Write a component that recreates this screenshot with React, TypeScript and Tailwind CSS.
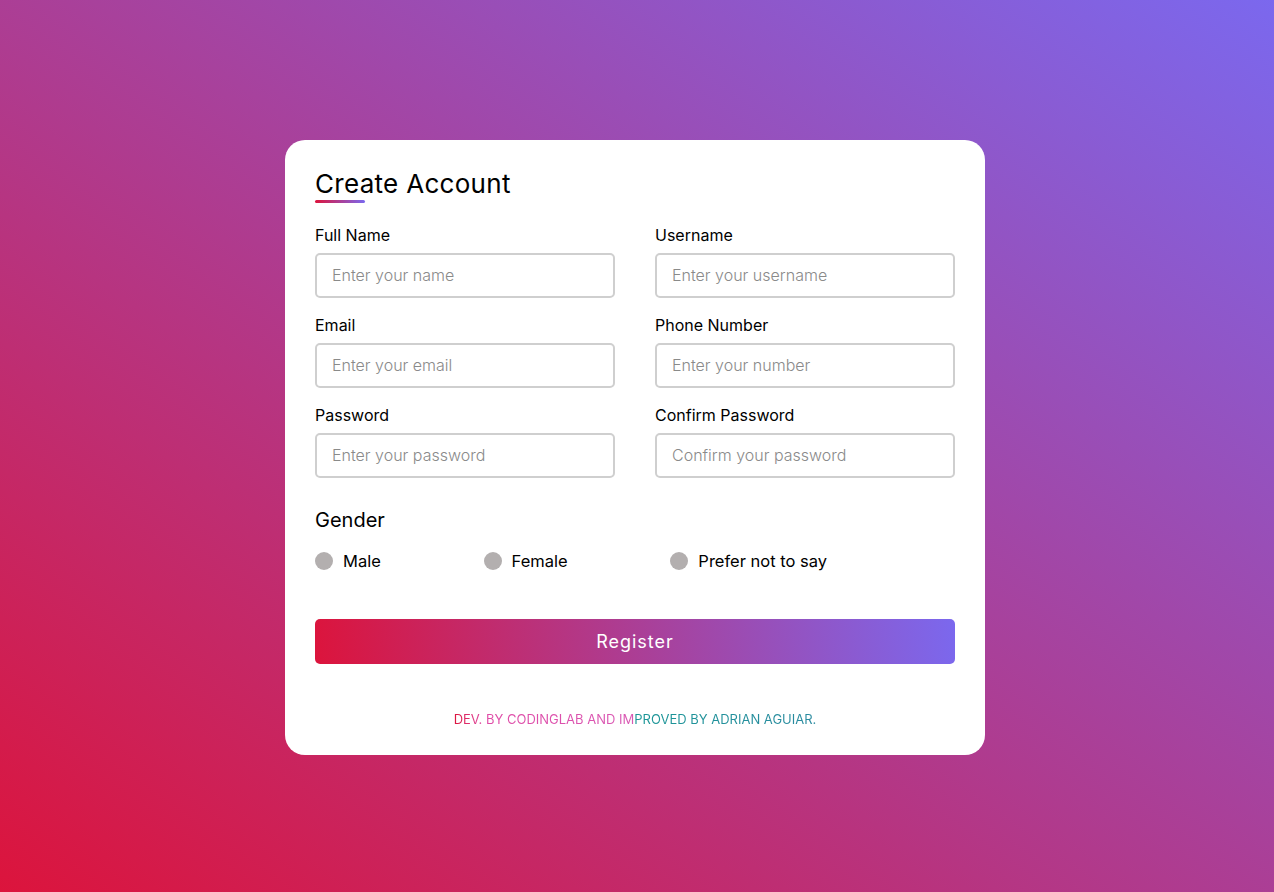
import React from 'react';

const fields = [
    { label: 'Full Name', placeholder: 'Enter your name' },
    { label: 'Username', placeholder: 'Enter your username' },
    { label: 'Email', placeholder: 'Enter your email' },
    { label: 'Phone Number', placeholder: 'Enter your number' },
    { label: 'Password', placeholder: 'Enter your password' },
    { label: 'Confirm Password', placeholder: 'Confirm your password' },
];

const genders = ['Male', 'Female', 'Prefer not to say'];

export default function App() {
    return (
        <div className="min-h-screen w-full flex items-center justify-center pr-1 pt-[3px] bg-[linear-gradient(to_top_right,#dc143c,#7b68ee)] font-['Inter','Open_Sans',sans-serif]">
            <div className="w-[700px] bg-white rounded-[20px] px-[30px] pt-[25px] pb-[27px]">
                {/* Title with gradient underline */}
                <div className="relative h-[37.5px] text-[26px] leading-[37.5px] font-normal tracking-[0.3px] text-black">
                    Create Account
                    <span className="absolute left-0 bottom-0 h-[3px] w-[50px] rounded-[5px] bg-[linear-gradient(to_right,#dc143c,#7b68ee)]"></span>
                </div>

                <form onSubmit={(e) => e.preventDefault()}>
                    <div className="flex flex-wrap justify-between mt-5 mb-3">
                        {fields.map((f) => (
                            <div key={f.label} className="w-[300px] mb-[15px]">
                                <span className="block text-base leading-[25px] font-normal text-black mb-[5px]">{f.label}</span>
                                <input
                                    type="text"
                                    placeholder={f.placeholder}
                                    className="h-[45px] w-full outline-none text-base rounded-[5px] pl-[15px] border-2 border-[#cfcfcf] placeholder:text-[#8a8a8a] placeholder:font-light"
                                />
                            </div>
                        ))}
                    </div>

                    {/* Gender */}
                    <div>
                        <span className="block text-[20px] leading-[30px] font-normal text-black">Gender</span>
                        <div className="flex justify-between w-[512px] my-[14px]">
                            {genders.map((g) => (
                                <label key={g} className="flex items-center leading-6 text-[16.5px] font-normal text-black">
                                    <span className="h-[18px] w-[18px] rounded-full bg-[#b3afaf] mr-[10px]"></span>
                                    {g}
                                </label>
                            ))}
                        </div>
                    </div>

                    <button
                        type="submit"
                        className="mt-[32px] mb-[46px] h-[45px] w-full rounded-[5px] text-white text-[18px] font-normal tracking-[1px] bg-[linear-gradient(82deg,#dc143c,#7b68ee)]"
                    >
                        Register
                    </button>
                </form>

                <p className="text-center text-[13px] leading-[18px] font-normal">
                    <span className="bg-[linear-gradient(to_right,#dc143c_0%,#e04aa6_8%,#d957b3_49.5%,#1a9696_50%,#2a8aa0_100%)] bg-clip-text text-transparent">
                        DEV. BY CODINGLAB AND IMPROVED BY ADRIAN AGUIAR.
                    </span>
                </p>
            </div>
        </div>
    );
}
